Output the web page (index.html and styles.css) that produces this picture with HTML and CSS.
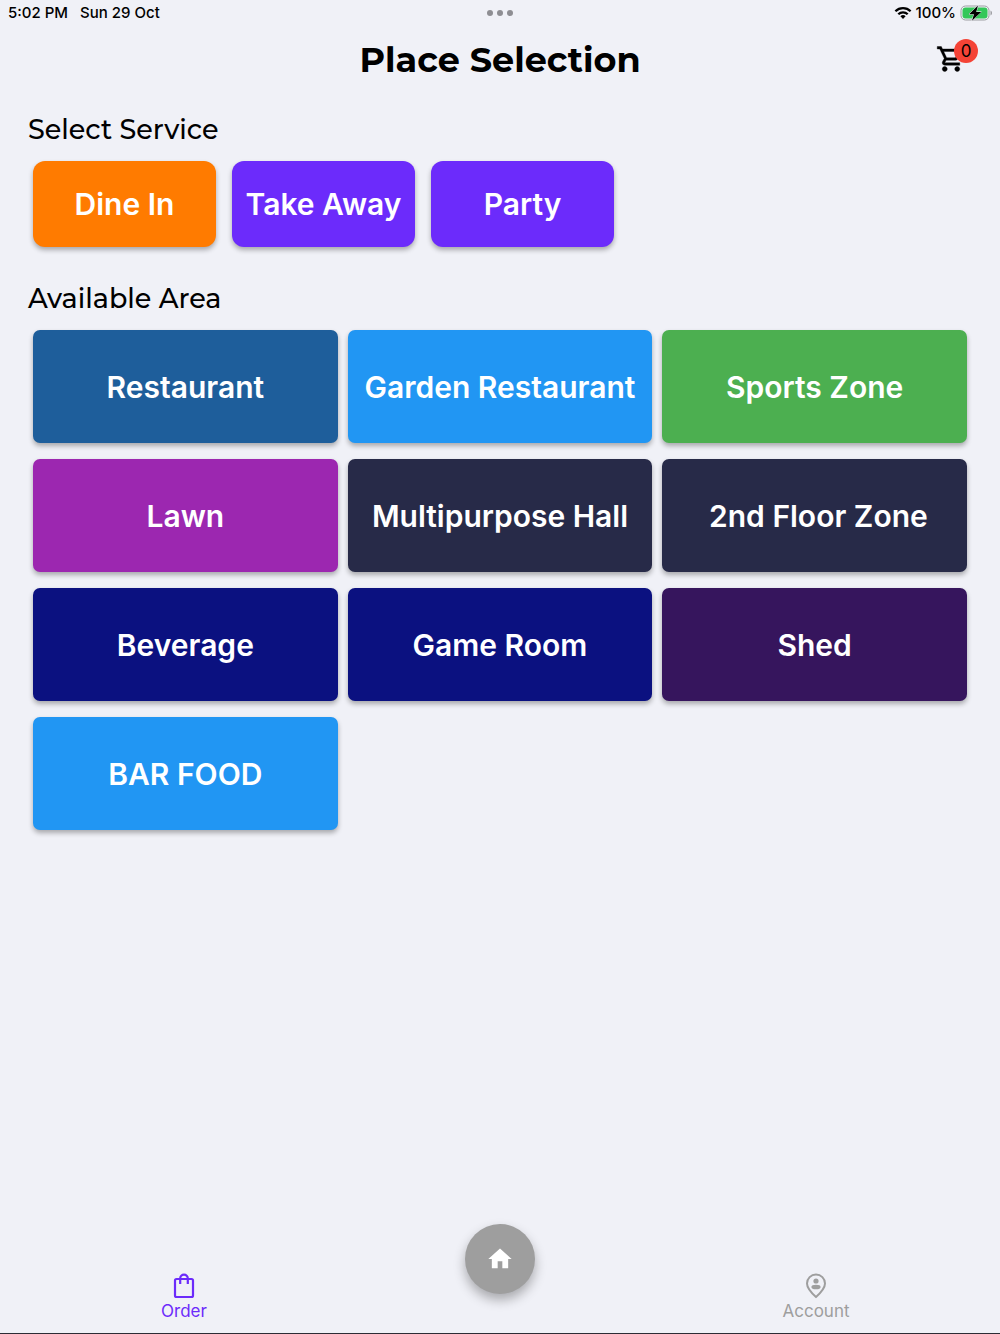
FILE: index.html
```html
<!DOCTYPE html>
<html lang="en">
<head>
    <meta charset="UTF-8">
    <meta name="viewport" content="width=device-width, initial-scale=1.0">
    <title>Place Selection</title>
    <link rel="stylesheet" href="styles.css">
</head>
<body>

    <!-- Status Bar -->
    <div class="status-bar">
        <div class="status-left">
            <span>5:02 PM</span>
            <span>Sun 29 Oct</span>
        </div>
        <div class="dots"><i></i><i></i><i></i></div>
        <div class="status-right">
            <svg width="18" height="14" viewBox="0 0 18 14" fill="none" stroke="#000" stroke-width="2.3">
                <path d="M1.4 5.2a10.8 10.8 0 0 1 15.2 0M4.3 8.3a6.7 6.7 0 0 1 9.4 0"/>
                <path d="M9 13l-2.6-2.7a3.7 3.7 0 0 1 5.2 0z" fill="#000" stroke="none"/>
            </svg>
            <span>100%</span>
            <svg width="32" height="16" viewBox="0 0 32 16">
                <rect x="1" y="1" width="28" height="14" rx="4.5" fill="none" stroke="#9c9da1"/>
                <rect x="2.5" y="2.5" width="25" height="11" rx="3" fill="#34c759"/>
                <path d="M30.500 5.500c2 .8 2 4.200 0 5z" fill="#9c9da1"/>
                <path d="M18 .5L9 9.200H14L12 15.700 21.200 6.900H16.200z" stroke="#f0f1f7" paint-order="stroke"/>
            </svg>
        </div>
    </div>

    <!-- Header -->
    <header class="header">
        <h1>Place Selection</h1>
        <button class="cart-btn" aria-label="Cart">
            <svg width="30" height="30" viewBox="0 0 24 24" stroke="#000" stroke-width=".3">
                <path d="M15.550 13c.75 0 1.410-.41 1.750-1.030l3.580-6.490A.996.996 0 0 0 20.010 4H5.210l-.94-2H1v2h2l3.600 7.590-1.350 2.440C4.520 15.370 5.480 17 7 17h12v-2H7l1.100-2h7.450zM6.160 6h12.150l-2.760 5H8.530L6.160 6zM7 18c-1.100 0-1.990.9-1.990 2S5.900 22 7 22s2-.9 2-2-.9-2-2-2zm10 0c-1.100 0-1.990.9-1.990 2s.89 2 1.990 2 2-.9 2-2-.9-2-2-2z"/>
            </svg>
            <span class="badge">0</span>
        </button>
    </header>

    <!-- Main Content -->
    <main class="content">
        <h2>Select Service</h2>
        <div class="services">
            <button class="service-btn active">Dine In</button>
            <button class="service-btn">Take Away</button>
            <button class="service-btn">Party</button>
        </div>

        <h2>Available Area</h2>
        <div class="areas">
            <button class="area-btn steel">Restaurant</button>
            <button class="area-btn blue">Garden Restaurant</button>
            <button class="area-btn green">Sports Zone</button>
            <button class="area-btn purple">Lawn</button>
            <button class="area-btn slate">Multipurpose Hall</button>
            <button class="area-btn slate">&nbsp;2nd Floor Zone</button>
            <button class="area-btn navy">Beverage</button>
            <button class="area-btn navy">Game Room</button>
            <button class="area-btn plum">Shed</button>
            <button class="area-btn blue">BAR FOOD</button>
        </div>
    </main>

    <!-- Bottom Navigation -->
    <nav class="bottom-nav">
        <a href="#" class="nav-item active">
            <svg width="30" height="30" viewBox="0 0 30 30" fill="none" stroke="currentColor" stroke-width="2.2">
                <rect x="6" y="8" width="18" height="18" rx="1.5"/>
                <path d="M11.200 13V7.500a3.800 3.800 0 0 1 7.600 0V13"/>
            </svg>
            <span>Order</span>
        </a>
        <button class="home-btn" aria-label="Home">
            <svg width="28" height="28" viewBox="0 0 24 24" fill="#fff">
                <path d="M10 20v-6h4v6h5v-8h3L12 3 2 12h3v8z"/>
            </svg>
        </button>
        <a href="#" class="nav-item">
            <svg width="30" height="30" viewBox="0 0 30 30" fill="none" stroke="currentColor" stroke-width="2">
                <path d="M15 26C10 21.500 6 17 6 12.500a9 9 0 0 1 18 0C24 17 20 21.500 15 26z"/>
                <circle cx="15" cy="10" r="2.600" fill="currentColor" stroke="none"/>
                <ellipse cx="15" cy="16" rx="4.600" ry="2.300" fill="currentColor" stroke="none"/>
            </svg>
            <span>Account</span>
        </a>
    </nav>

</body>
</html>
```

FILE: styles.css
```css
* {
    margin: 0;
    padding: 0;
    box-sizing: border-box;
}
body {
    font-family: Inter, "Helvetica Neue", Arial, sans-serif;
    background-color: #f0f1f7;
    color: #000;
    min-height: 100vh;
    display: flex;
    flex-direction: column;
    border-bottom: 1px solid #2c2c34;
}
button {
    border: none;
    font-family: inherit;
    cursor: pointer;
}
svg {
    display: block;
}
/* Status bar */
.status-bar {
    display: grid;
    grid-template-columns: 1fr auto 1fr;
    align-items: center;
    height: 25px;
    padding: 0 8px;
    font-size: 15px;
    font-weight: 500;
}
.status-left {
    display: flex;
    gap: 12px;
}
.status-right {
    display: flex;
    align-items: center;
    justify-content: flex-end;
    gap: 4px;
}
.dots {
    display: flex;
    gap: 4px;
}
.dots i {
    width: 6px;
    height: 6px;
    border-radius: 50%;
    background: #8e8e93;
}
/* Header */
.header {
    display: grid;
    grid-template-columns: 1fr auto 1fr;
    align-items: center;
    height: 68px;
    padding: 0 34px;
}
.header h1 {
    grid-column: 2;
    font-family: Montserrat, Inter, sans-serif;
    font-size: 35px;
    font-weight: 700;
}
.cart-btn {
    position: relative;
    justify-self: end;
    background: none;
}
.badge {
    position: absolute;
    top: -5px;
    right: -12px;
    width: 24px;
    height: 24px;
    border-radius: 50%;
    background: #f44336;
    font-size: 17px;
    line-height: 24px;
    text-align: center;
}
/* Main content */
.content {
    flex: 1;
    padding: 19px 33px;
}
.content h2 {
    margin: 0 -5px 13px;
    font-family: Montserrat, Inter, sans-serif;
    font-size: 27px;
    font-weight: 500;
    line-height: 36px;
}
.services {
    display: flex;
    gap: 16px;
    margin-bottom: 34px;
}
.service-btn,
.area-btn {
    color: white;
    font-size: 30px;
    font-weight: 600;
    box-shadow: 0 3px 5px rgba(0, 0, 0, 0.3);
}
.service-btn {
    width: 183px;
    height: 86px;
    border-radius: 12px;
    background: #6c2bfb;
}
.service-btn.active {
    background: #ff7b00;
}
.areas {
    display: grid;
    grid-template-columns: repeat(3, 1fr);
    gap: 16px 10px;
}
.area-btn {
    height: 113px;
    border-radius: 7px;
}
.steel { background: #1e5e9b; }
.blue { background: #2196f3; }
.green { background: #4caf50; }
.purple { background: #9c27b0; }
.slate { background: #272a48; }
.navy { background: #0b1180; }
.plum { background: #36155d; }
/* Bottom navigation */
.bottom-nav {
    display: grid;
    grid-template-columns: repeat(3, 1fr);
    align-items: end;
    padding: 0 26px 12px;
}
.nav-item {
    display: flex;
    flex-direction: column;
    align-items: center;
    color: #9e9e9e;
    font-size: 17px;
    line-height: 20px;
    text-decoration: none;
}
.nav-item.active {
    color: #6c2bfb;
}
.home-btn {
    display: flex;
    align-items: center;
    justify-content: center;
    justify-self: center;
    width: 70px;
    height: 70px;
    margin-bottom: 27px;
    border-radius: 50%;
    background: #9e9e9e;
    box-shadow: 0 6px 12px rgba(0, 0, 0, 0.3);
}
```
